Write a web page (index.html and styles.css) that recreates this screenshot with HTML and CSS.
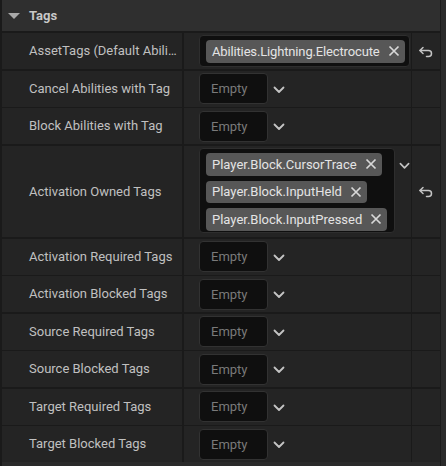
FILE: index.html
```html
<!DOCTYPE html>
<html>
<head>
<meta charset="utf-8">
<link rel="stylesheet" href="styles.css">
</head>
<body>
<div class="panel">
  <div class="main">
    <div class="header">
      <span class="caret"></span>
      <span class="title">Tags</span>
    </div>
    <div class="rows">
      <div class="row">
        <div class="label">AssetTags (Default Abili…</div>
        <div class="value">
          <div class="tagbox single">
            <span class="chip">Abilities.Lightning.Electrocute<svg class="x" viewBox="0 0 12 12"><path d="M1.5 1.5 L10.5 10.5 M10.5 1.5 L1.5 10.5"/></svg></span>
          </div>
        </div>
        <div class="reset"><svg viewBox="0 0 16 13"><path d="M5 2.5 L1.8 5.5 L5 8.5 M1.8 5.5 H10.5 A3 3 0 0 1 10.5 11.5 H8.5"/></svg></div>
      </div>
      <div class="row">
        <div class="label">Cancel Abilities with Tag</div>
        <div class="value"><div class="empty">Empty</div><svg class="chev" viewBox="0 0 12 8"><path d="M1.5 1.5 L6 6 L10.5 1.5"/></svg></div>
        <div class="reset"></div>
      </div>
      <div class="row">
        <div class="label">Block Abilities with Tag</div>
        <div class="value"><div class="empty">Empty</div><svg class="chev" viewBox="0 0 12 8"><path d="M1.5 1.5 L6 6 L10.5 1.5"/></svg></div>
        <div class="reset"></div>
      </div>
      <div class="row tall">
        <div class="label">Activation Owned Tags</div>
        <div class="value top">
          <div class="tagbox multi">
            <span class="chip">Player.Block.CursorTrace<svg class="x" viewBox="0 0 12 12"><path d="M1.5 1.5 L10.5 10.5 M10.5 1.5 L1.5 10.5"/></svg></span>
            <span class="chip">Player.Block.InputHeld<svg class="x" viewBox="0 0 12 12"><path d="M1.5 1.5 L10.5 10.5 M10.5 1.5 L1.5 10.5"/></svg></span>
            <span class="chip">Player.Block.InputPressed<svg class="x" viewBox="0 0 12 12"><path d="M1.5 1.5 L10.5 10.5 M10.5 1.5 L1.5 10.5"/></svg></span>
          </div>
          <svg class="chev small" viewBox="0 0 12 8"><path d="M1.5 1.5 L6 6 L10.5 1.5"/></svg>
        </div>
        <div class="reset"><svg viewBox="0 0 16 13"><path d="M5 2.5 L1.8 5.5 L5 8.5 M1.8 5.5 H10.5 A3 3 0 0 1 10.5 11.5 H8.5"/></svg></div>
      </div>
      <div class="row">
        <div class="label">Activation Required Tags</div>
        <div class="value"><div class="empty">Empty</div><svg class="chev" viewBox="0 0 12 8"><path d="M1.5 1.5 L6 6 L10.5 1.5"/></svg></div>
        <div class="reset"></div>
      </div>
      <div class="row">
        <div class="label">Activation Blocked Tags</div>
        <div class="value"><div class="empty">Empty</div><svg class="chev" viewBox="0 0 12 8"><path d="M1.5 1.5 L6 6 L10.5 1.5"/></svg></div>
        <div class="reset"></div>
      </div>
      <div class="row">
        <div class="label">Source Required Tags</div>
        <div class="value"><div class="empty">Empty</div><svg class="chev" viewBox="0 0 12 8"><path d="M1.5 1.5 L6 6 L10.5 1.5"/></svg></div>
        <div class="reset"></div>
      </div>
      <div class="row">
        <div class="label">Source Blocked Tags</div>
        <div class="value"><div class="empty">Empty</div><svg class="chev" viewBox="0 0 12 8"><path d="M1.5 1.5 L6 6 L10.5 1.5"/></svg></div>
        <div class="reset"></div>
      </div>
      <div class="row">
        <div class="label">Target Required Tags</div>
        <div class="value"><div class="empty">Empty</div><svg class="chev" viewBox="0 0 12 8"><path d="M1.5 1.5 L6 6 L10.5 1.5"/></svg></div>
        <div class="reset"></div>
      </div>
      <div class="row">
        <div class="label">Target Blocked Tags</div>
        <div class="value"><div class="empty">Empty</div><svg class="chev" viewBox="0 0 12 8"><path d="M1.5 1.5 L6 6 L10.5 1.5"/></svg></div>
        <div class="reset"></div>
      </div>
    </div>
    <div class="footer"></div>
  </div>
  <div class="scroll"></div>
</div>
</body>
</html>
```

FILE: styles.css
```css
html, body {
  margin: 0;
  padding: 0;
  background: #1a1a1a;
}
body {
  font-family: Roboto, "Liberation Sans", sans-serif;
  font-size: 13px;
}
.panel {
  display: flex;
  width: 446px;
  height: 466px;
  overflow: hidden;
}
.main {
  width: 438px;
  margin-left: 2px;
  display: flex;
  flex-direction: column;
}
.scroll {
  width: 5px;
  margin-left: 1px;
  background: #2a2a2a;
}
.header {
  height: 31px;
  background: #2f2f2f;
  display: flex;
  align-items: center;
  margin-bottom: 2px;
}
.caret {
  width: 0;
  height: 0;
  margin-left: 6px;
  margin-right: 9px;
  margin-top: 1px;
  border-left: 6px solid transparent;
  border-right: 6px solid transparent;
  border-top: 6px solid #a9a9a9;
}
.title {
  font-weight: bold;
  color: #c8c8c8;
  font-size: 13px;
}
.rows {
  display: flex;
  flex-direction: column;
  gap: 1.5px;
}
.row {
  display: flex;
  height: 36px;
}
.row.tall {
  height: 91.5px;
}
.label {
  width: 180px;
  box-sizing: border-box;
  padding-left: 27px;
  background: #242424;
  color: #c0c0c0;
  white-space: nowrap;
  line-height: 36px;
}
.tall .label {
  line-height: 91.5px;
}
.value {
  width: 227px;
  margin-left: 2px;
  box-sizing: border-box;
  padding-left: 15px;
  background: #242424;
  display: flex;
  align-items: center;
}
.value.top {
  align-items: flex-start;
}
.reset {
  flex: 1;
  margin-left: 1px;
  background: #242424;
  display: flex;
  align-items: center;
  justify-content: center;
}
.reset svg {
  width: 16px;
  height: 13px;
  fill: none;
  stroke: #c4c4c4;
  stroke-width: 1.5;
  stroke-linecap: round;
  stroke-linejoin: round;
}
.empty {
  width: 69px;
  height: 31px;
  box-sizing: border-box;
  border: 1px solid #323232;
  border-radius: 4px;
  background: #0f0f0f;
  color: #7a7a7a;
  padding-left: 11px;
  line-height: 29px;
}
.chev {
  width: 12px;
  height: 8px;
  margin-left: 5px;
  margin-top: 2px;
  fill: none;
  stroke: #c4c4c4;
  stroke-width: 1.8;
  stroke-linecap: round;
  stroke-linejoin: round;
}
.chev.small {
  width: 11px;
  margin-top: 16px;
  margin-left: 4px;
}
.tagbox {
  box-sizing: border-box;
  border: 1px solid #2e2e2e;
  border-radius: 4px;
  background: #0f0f0f;
  display: flex;
  flex-direction: column;
  align-items: flex-start;
}
.tagbox.single {
  width: 211px;
  height: 32px;
  padding: 4px 5px 0 6px;
}
.tagbox.multi {
  width: 196px;
  height: 85px;
  margin-top: 2.5px;
  padding: 4px 0 0 6px;
  gap: 5px;
}
.chip {
  height: 22.5px;
  box-sizing: border-box;
  background: #575757;
  border-radius: 4px;
  color: #e4e4e4;
  display: flex;
  align-items: center;
  padding-left: 6px;
  padding-right: 5px;
  white-space: nowrap;
}
.tagbox.single .chip {
  letter-spacing: -0.15px;
}
.chip .x {
  flex-shrink: 0;
  width: 12px;
  height: 12px;
  margin-left: 8px;
  fill: none;
  stroke: #d8d8d8;
  stroke-width: 1.7;
}
.footer {
  flex: 1;
  background: #2a2a2a;
}
```
